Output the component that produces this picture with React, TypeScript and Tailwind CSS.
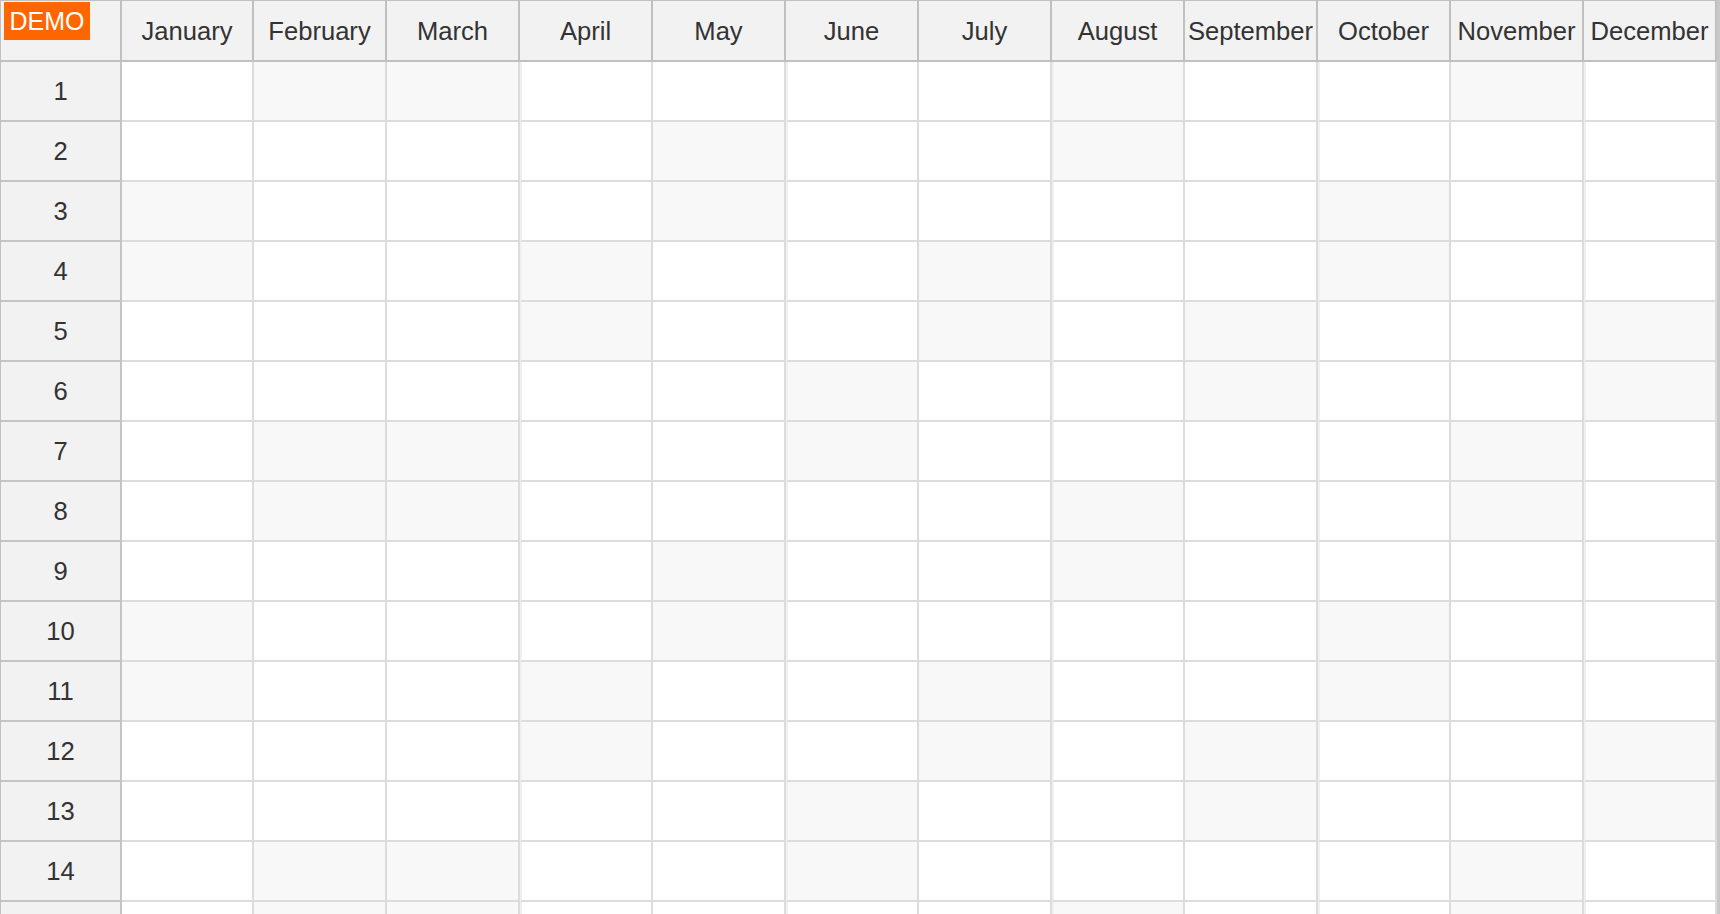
import React from "react";

const MONTHS = [
  "January",
  "February",
  "March",
  "April",
  "May",
  "June",
  "July",
  "August",
  "September",
  "October",
  "November",
  "December",
];

const ROWS = Array.from({ length: 15 }, (_, i) => i + 1);

function isWeekend(month: number, day: number) {
  const d = new Date(2015, month, day).getDay();
  return d === 0 || d === 6;
}

export default function App() {
  return (
    <div className="relative w-[1720px] h-[914px] overflow-hidden bg-white font-['Liberation_Sans',Arial,sans-serif] text-[#333333] text-[25.6px] leading-none">
      <div className="flex">
        <div className="flex flex-col border-l border-t border-[#c0c0c0]">
          {/* header row */}
          <div className="flex">
            <div className="w-[121px] h-[61px] shrink-0 bg-[#f2f2f2] border-r-2 border-b-2 border-[#c0c0c0]" />
            {MONTHS.map((m, i) => (
              <div
                key={m}
                className={`${i === 0 ? "w-[132px]" : "w-[133px]"} h-[61px] shrink-0 bg-[#f2f2f2] border-r-2 border-b-2 border-[#c0c0c0] flex items-center justify-center pt-[2px] whitespace-nowrap`}
              >
                {m}
              </div>
            ))}
          </div>
          {ROWS.map((r) => (
            <div key={r} className="flex">
              <div className="w-[121px] h-[60px] shrink-0 bg-[#f2f2f2] border-r-2 border-b-2 border-[#c4c4c4] flex items-center justify-center pt-[2px]">
                {r < 15 ? r : ""}
              </div>
              {MONTHS.map((m, i) => {
                const weekend = isWeekend(i, r);
                const strip = i % 2 === 1 && i >= 3;
                return (
                  <div
                    key={m}
                    className={`${i === 0 ? "w-[132px]" : "w-[133px]"} h-[60px] shrink-0 border-r-2 border-b-2 border-[#dcdcdc] ${
                      weekend ? "bg-[#f8f8f8]" : "bg-white"
                    } ${strip ? "border-l-2 border-l-[#f0f0f0]" : ""}`}
                  />
                );
              })}
            </div>
          ))}
        </div>
        <div className="w-[3px] shrink-0 bg-[#c8c8c8]" />
      </div>
      <div className="absolute left-[4px] top-[2px] w-[86px] h-[38px] bg-[#ff6600] text-white flex items-center justify-center text-[25px]">
        DEMO
      </div>
    </div>
  );
}
